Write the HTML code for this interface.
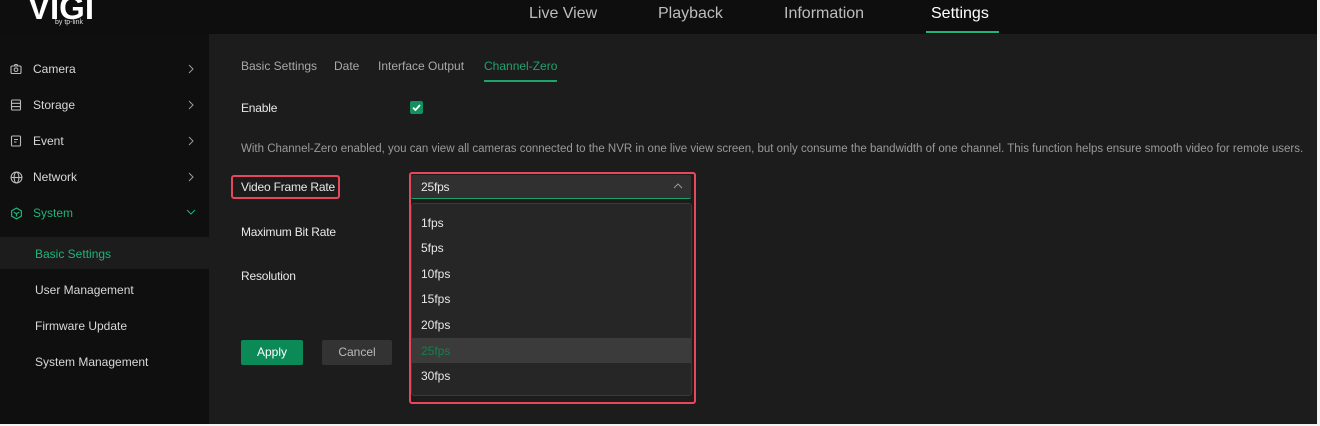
<!DOCTYPE html>
<html><head><meta charset="utf-8"><style>
*{margin:0;padding:0;box-sizing:border-box}
body{width:1320px;height:426px;background:#0f0f0f;font-family:"Liberation Sans",sans-serif;color:#e6e6e6;position:relative;overflow:hidden;font-size:12px}
.abs{position:absolute;white-space:nowrap}
.top{left:0;top:0;width:1320px;height:34px;background:#0e0e0e}
.nav{top:5px;font-size:16px;color:#bdbdbd}
.content{left:209px;top:34px;width:1108px;height:390px;background:#1c1c1c}
.side{font-size:12px;color:#d8d8d8}
.tab{top:59px;font-size:12px;color:#a8a8a8}
.lbl{font-size:12px;color:#e8e8e8;letter-spacing:-0.2px}
.opt{left:421px;font-size:12px;color:#e8e8e8}
.red{border:2px solid #e5485a;border-radius:3px}
</style></head><body>
<div class="abs top"></div>
<div class="abs" style="left:28px;top:-11px;font-size:33px;font-weight:bold;color:#fff;letter-spacing:0px">VIGI</div>
<div class="abs" style="left:55px;top:19px;font-size:7px;color:#ddd">by tp-link</div>
<div class="abs nav" style="left:529px">Live View</div>
<div class="abs nav" style="left:658px">Playback</div>
<div class="abs nav" style="left:784px">Information</div>
<div class="abs nav" style="left:931px;color:#fff">Settings</div>
<div class="abs" style="left:926px;top:31px;width:73px;height:2px;background:#1eb47a"></div>

<div class="abs content"></div>

<svg class="abs" style="left:10px;top:63px" width="12" height="12" viewBox="0 0 12 12" fill="none" stroke="#bbb" stroke-width="1.1"><rect x="1" y="3" width="10" height="7.5" rx="1"/><path d="M4 3 L5 1.5 H7 L8 3"/><circle cx="6" cy="6.7" r="1.8"/></svg>
<div class="abs side" style="left:33px;top:62px">Camera</div>
<svg class="abs" style="left:188px;top:64px" width="6" height="10" viewBox="0 0 6 10" fill="none" stroke="#9a9a9a" stroke-width="1"><path d="M1 1L5 5L1 9"/></svg>
<svg class="abs" style="left:10px;top:99px" width="12" height="12" viewBox="0 0 12 12" fill="none" stroke="#bbb" stroke-width="1.1"><rect x="1.5" y="1" width="9" height="10" rx="1"/><path d="M1.5 4.3H10.5M1.5 7.6H10.5"/></svg>
<div class="abs side" style="left:33px;top:98px">Storage</div>
<svg class="abs" style="left:188px;top:100px" width="6" height="10" viewBox="0 0 6 10" fill="none" stroke="#9a9a9a" stroke-width="1"><path d="M1 1L5 5L1 9"/></svg>
<svg class="abs" style="left:10px;top:135px" width="12" height="12" viewBox="0 0 12 12" fill="none" stroke="#bbb" stroke-width="1.1"><rect x="1.5" y="1" width="9" height="10" rx="1"/><path d="M4 4.5H8M4 7H6.5"/></svg>
<div class="abs side" style="left:33px;top:134px">Event</div>
<svg class="abs" style="left:188px;top:136px" width="6" height="10" viewBox="0 0 6 10" fill="none" stroke="#9a9a9a" stroke-width="1"><path d="M1 1L5 5L1 9"/></svg>
<svg class="abs" style="left:10px;top:171px" width="13" height="13" viewBox="0 0 12 12" fill="none" stroke="#bbb" stroke-width="1"><circle cx="6" cy="6" r="5"/><ellipse cx="6" cy="6" rx="2.2" ry="5"/><path d="M1 6H11"/></svg>
<div class="abs side" style="left:33px;top:170px">Network</div>
<svg class="abs" style="left:188px;top:172px" width="6" height="10" viewBox="0 0 6 10" fill="none" stroke="#9a9a9a" stroke-width="1"><path d="M1 1L5 5L1 9"/></svg>
<svg class="abs" style="left:10px;top:207px" width="13" height="13" viewBox="0 0 12 12" fill="none" stroke="#1eb47a" stroke-width="1.1"><path d="M6 1 L10.5 3.5 V8.5 L6 11 L1.5 8.5 V3.5Z"/><path d="M3.5 4.8 L6 6.2 L8.5 4.8 M6 6.2V8.8"/></svg>
<div class="abs side" style="left:33px;top:206px;color:#1eb47a">System</div>
<svg class="abs" style="left:186px;top:209px" width="10" height="6" viewBox="0 0 10 6" fill="none" stroke="#1eb47a" stroke-width="1"><path d="M1 1L5 5L9 1"/></svg>
<div class="abs" style="left:0;top:237px;width:209px;height:32px;background:#1c1c1c"></div>
<div class="abs side" style="left:35px;top:247px;color:#1eb47a">Basic Settings</div>
<div class="abs side" style="left:35px;top:283px">User Management</div>
<div class="abs side" style="left:35px;top:319px">Firmware Update</div>
<div class="abs side" style="left:35px;top:355px">System Management</div>

<div class="abs tab" style="left:241px">Basic Settings</div>
<div class="abs tab" style="left:334px">Date</div>
<div class="abs tab" style="left:378px">Interface Output</div>
<div class="abs tab" style="left:484px;color:#1ea36c">Channel-Zero</div>
<div class="abs" style="left:484px;top:80px;width:73px;height:2px;background:#1ea36c"></div>

<div class="abs lbl" style="left:241px;top:101px">Enable</div>
<div class="abs" style="left:410px;top:101px;width:13px;height:13px;background:#12915e;border-radius:2px"></div>
<svg class="abs" style="left:410px;top:101px" width="13" height="13" viewBox="0 0 13 13" fill="none" stroke="#fff" stroke-width="1.8"><path d="M3 6.7L5.5 9L10 4"/></svg>
<div class="abs" style="left:241px;top:143px;color:#9a9a9a;font-size:11.5px">With Channel-Zero enabled, you can view all cameras connected to the NVR in one live view screen, but only consume the bandwidth of one channel. This function helps ensure smooth video for remote users.</div>

<div class="abs red" style="left:231px;top:175px;width:109px;height:24px"></div>
<div class="abs lbl" style="left:241px;top:180px">Video Frame Rate</div>
<div class="abs lbl" style="left:241px;top:225px">Maximum Bit Rate</div>
<div class="abs lbl" style="left:241px;top:269px">Resolution</div>

<div class="abs" style="left:241px;top:340px;width:62px;height:25px;background:#0b8a57;border-radius:2px;color:#fff;font-size:12px;text-align:center;line-height:25px">Apply</div>
<div class="abs" style="left:322px;top:340px;width:70px;height:25px;background:#333;border-radius:2px;color:#bbb;font-size:12px;text-align:center;line-height:25px">Cancel</div>

<div class="abs red" style="left:409px;top:172px;width:287px;height:232px"></div>
<div class="abs" style="left:411px;top:175px;width:280px;height:24px;background:#303030;border-bottom:1px solid #1ea36c;border-radius:2px"></div>
<div class="abs lbl" style="left:421px;top:180px">25fps</div>
<svg class="abs" style="left:673px;top:183px" width="10" height="6" viewBox="0 0 10 6" fill="none" stroke="#999" stroke-width="1"><path d="M1 5L5 1L9 5"/></svg>
<div class="abs" style="left:411px;top:203px;width:281px;height:193px;background:#262626;border:1px solid #3a3a3a;border-radius:3px"></div>
<div class="abs opt" style="top:216px">1fps</div>
<div class="abs opt" style="top:241px">5fps</div>
<div class="abs opt" style="top:267px">10fps</div>
<div class="abs opt" style="top:292px">15fps</div>
<div class="abs opt" style="top:318px">20fps</div>
<div class="abs" style="left:412px;top:338px;width:279px;height:25px;background:#3b3b3b"></div>
<div class="abs opt" style="top:344px;color:#14804f">25fps</div>
<div class="abs opt" style="top:369px">30fps</div>
<div class="abs" style="left:1317px;top:0;width:3px;height:426px;background:#f2f2f2"></div>
<div class="abs" style="left:0;top:424px;width:1320px;height:2px;background:#f2f2f2"></div>
</body></html>
